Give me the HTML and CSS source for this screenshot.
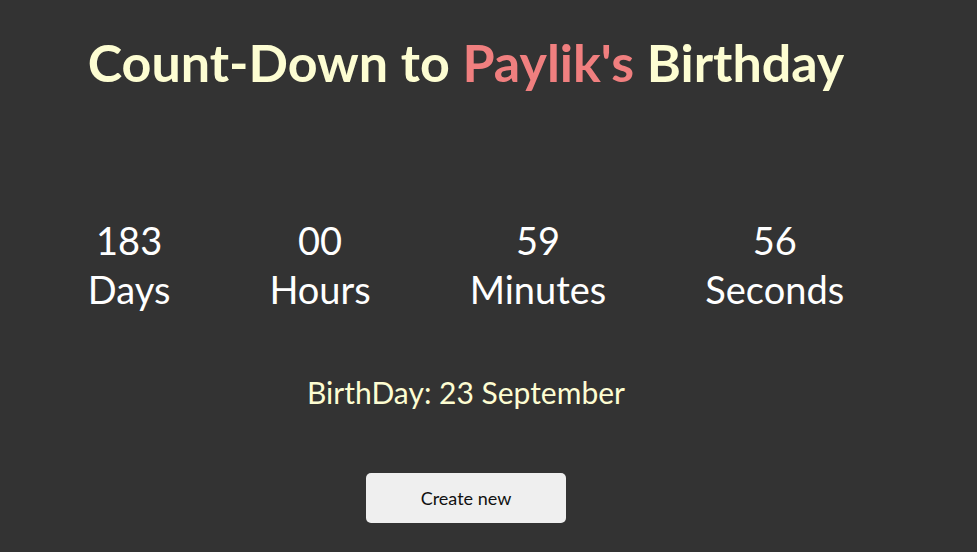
FILE: index.html
```html
<!DOCTYPE html>
<html>
<head>
<meta charset="utf-8">
<link rel="stylesheet" href="styles.css">
</head>
<body>
<main class="page">
  <h1 class="title">Count-Down to <span class="name">Paylik's</span> Birthday</h1>
  <div class="countdown">
    <div class="unit"><div class="num">183</div><div class="label">Days</div></div>
    <div class="unit"><div class="num">00</div><div class="label">Hours</div></div>
    <div class="unit"><div class="num">59</div><div class="label">Minutes</div></div>
    <div class="unit"><div class="num">56</div><div class="label">Seconds</div></div>
  </div>
  <p class="date">BirthDay: 23 September</p>
  <button class="create">Create new</button>
</main>
</body>
</html>
```
FILE: styles.css
```css
html, body {
  margin: 0;
  padding: 0;
  background: #333333;
  height: 100%;
}
body {
  font-family: Lato, "Open Sans", sans-serif;
}
.page {
  width: 932px;
  display: flex;
  flex-direction: column;
  align-items: center;
}
.title {
  margin: 32px 0 0;
  font-size: 52px;
  line-height: 60px;
  font-weight: 700;
  color: #fdfdd2;
}
.name {
  color: #f07f7f;
}
.countdown {
  margin-top: 124px;
  display: flex;
  gap: 99px;
  color: #ffffff;
}
.unit {
  text-align: center;
  font-size: 38px;
  line-height: 49px;
}
.date {
  margin: 58px 0 0;
  font-size: 30px;
  line-height: 40px;
  color: #fdfdd2;
}
.create {
  margin-top: 61px;
  width: 200px;
  height: 50px;
  border: none;
  border-radius: 5px;
  background: #efefef;
  color: #111;
  font-family: Lato, "Open Sans", sans-serif;
  font-size: 18px;
}
```
